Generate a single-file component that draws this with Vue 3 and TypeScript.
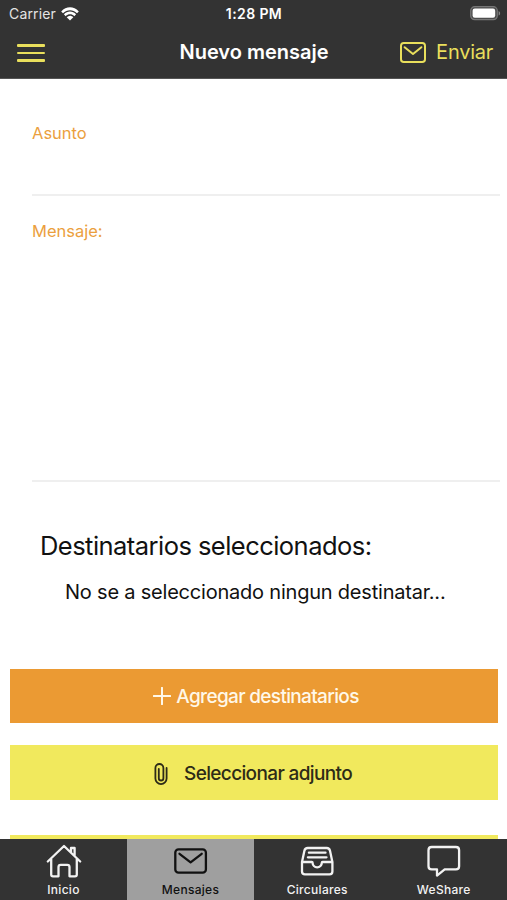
<script setup lang="ts">
import { ref } from 'vue'

type TabId = 'inicio' | 'mensajes' | 'circulares' | 'weshare'

interface Tab {
  id: TabId
  label: string
}

const tabs: Tab[] = [
  { id: 'inicio', label: 'Inicio' },
  { id: 'mensajes', label: 'Mensajes' },
  { id: 'circulares', label: 'Circulares' },
  { id: 'weshare', label: 'WeShare' },
]

const active = ref<TabId>('mensajes')
const subject = ref('')
const message = ref('')
</script>

<template>
  <div class="screen">
    <header class="header">
      <div class="status">
        <div class="carrier">
          <span>Carrier</span>
          <svg class="wifi" viewBox="0 0 18 14" width="18" height="14">
            <path d="M0.2 4.4C5.2-1 12.800-1 17.800 4.400L16 6.300C12 2.300 6 2.300 2 6.300Z" />
            <path d="M2.900 7.300C6.400 3.700 11.600 3.700 15.100 7.300L13.300 9.200C10.800 6.700 7.200 6.700 4.700 9.200Z" />
            <path d="M5.700 10.200C7.700 8.200 10.300 8.200 12.300 10.200L9 13.600Z" />
          </svg>
        </div>
        <div class="time">1:28 PM</div>
        <div class="battery">
          <svg viewBox="0 0 31 15" width="31" height="15">
            <rect x=".7" y=".7" width="26.6" height="13" rx="4" fill="#4d4d4d" stroke="#777" stroke-width="1.2" />
            <rect x="2.6" y="2.6" width="22.6" height="9.2" rx="2.2" fill="#fff" />
            <path d="M28.6 5c2 .8 2 3.800 0 4.600z" fill="#858585" />
          </svg>
        </div>
      </div>
      <div class="nav">
        <button class="menu" aria-label="Menú"><i></i><i></i><i></i></button>
        <h1 class="title">Nuevo mensaje</h1>
        <button class="send">
          <svg viewBox="0 0 26 21" width="26" height="21">
            <rect x="1" y="1" width="24" height="19" rx="2.800" />
            <path d="M4.600 5.200L13 12l8.400-6.800" />
          </svg>
          <span>Enviar</span>
        </button>
      </div>
    </header>

    <main class="content">
      <label class="field subject">
        <span class="label">Asunto</span>
        <input v-model="subject" type="text" />
      </label>
      <label class="field message">
        <span class="label">Mensaje:</span>
        <textarea v-model="message"></textarea>
      </label>
      <h2 class="heading">Destinatarios seleccionados:</h2>
      <p class="empty">No se a seleccionado ningun destinatar...</p>
      <button class="btn add">
        <svg viewBox="0 0 18 18" width="18" height="18"><path d="M9 .8v16.400M.8 9h16.400" /></svg>
        <span>Agregar destinatarios</span>
      </button>
      <button class="btn attach">
        <svg viewBox="0 0 14 22" width="14" height="22">
          <path d="M12.600 5v10.500a5.600 5.600 0 0 1-11.200 0V5a4 4 0 0 1 8 0v10.200a2.300 2.300 0 0 1-4.600 0V6" />
        </svg>
        <span>Seleccionar adjunto</span>
      </button>
      <div class="btn next"></div>
    </main>

    <nav class="tabs">
      <button
        v-for="tab in tabs"
        :key="tab.id"
        :class="['tab', tab.id, { active: tab.id === active }]"
        @click="active = tab.id"
      >
        <svg viewBox="0 0 36 34" width="36" height="34">
          <template v-if="tab.id === 'inicio'">
            <path d="M1.800 17.500L18 2l16.200 15.500M25 8.500V4h3.600v8M5.200 15v15.500q0 1.800 1.800 1.800h5.500V23q0-2.200 2.200-2.200h6.600q2.200 0 2.200 2.200v9.300H29q1.800 0 1.800-1.800V15" />
          </template>
          <template v-else-if="tab.id === 'mensajes'">
            <rect x="2.300" y="5.300" width="30.600" height="23.400" rx="3.200" />
            <path d="M6.500 9.800l11.100 8.500 11.100-8.500" />
          </template>
          <template v-else-if="tab.id === 'circulares'">
            <path d="M3 18L5.400 6.800Q6 4 8.700 4h19q2.700 0 3.300 2.800L33.400 18v9.400q0 2.900-2.900 2.900H5.900Q3 30.300 3 27.400zM3 18h9.800q.8 0 .8.800a4.600 4.600 0 0 0 9.200 0q0-.8.800-.8h9.800M9.900 8.700h16.600M8.900 13.300h18.600" />
          </template>
          <template v-else>
            <path d="M5.700 3h24.200q3.200 0 3.200 3.200v16q0 3.200-3.200 3.200H18.700L11 31.600v-6.200H5.700q-3.200 0-3.200-3.200v-16Q2.500 3 5.700 3z" />
          </template>
        </svg>
        <span>{{ tab.label }}</span>
      </button>
    </nav>
  </div>
</template>

<style>
body {
  margin: 0;
  background: #fff;
}
</style>

<style scoped>
.screen {
  width: 507px;
  height: 900px;
  display: flex;
  flex-direction: column;
  overflow: hidden;
  background: #fff;
  font-family: Inter, 'Liberation Sans', sans-serif;
  color: #111;
}
button {
  border: 0;
  padding: 0;
  background: none;
  font: inherit;
  color: inherit;
}
svg {
  display: block;
  flex: none;
}
span {
  white-space: nowrap;
}
.header {
  flex: none;
  height: 79px;
  box-sizing: border-box;
  background: #333;
  border-bottom: 1px solid #555;
  color: #fff;
}
.status {
  height: 27px;
  display: grid;
  grid-template-columns: 1fr auto 1fr;
  align-items: center;
  padding: 0 6px 0 9px;
  font-size: 14px;
}
.carrier {
  display: flex;
  align-items: center;
  gap: 5px;
  color: #e4e4e4;
  letter-spacing: 0.15px;
}
.wifi {
  fill: #fff;
}
.time {
  margin-right: 2px;
  font-weight: 600;
  font-size: 14px;
  letter-spacing: 0.400px;
}
.battery {
  justify-self: end;
}
.nav {
  height: 50px;
  display: grid;
  grid-template-columns: 1fr auto 1fr;
  align-items: center;
  padding: 0 14px 0 17px;
}
.menu {
  width: 28px;
  display: grid;
  gap: 4.500px;
  padding-top: 2px;
}
.menu i {
  height: 2.700px;
  border-radius: 1px;
  background: #e9df5c;
}
.title {
  margin: 0 2px 0 0;
  font-size: 20px;
  font-weight: 600;
}
.send {
  justify-self: end;
  display: flex;
  align-items: center;
  gap: 10px;
  color: #e9df5c;
  font-size: 20px;
  letter-spacing: -0.250px;
}
.send svg,
.btn svg,
.tab svg {
  fill: none;
  stroke: currentColor;
  stroke-width: 2;
  stroke-linecap: round;
  stroke-linejoin: round;
}
.content {
  flex: 1;
  min-height: 0;
  overflow: hidden;
  display: flex;
  flex-direction: column;
}
.field {
  flex: none;
  box-sizing: border-box;
  display: flex;
  flex-direction: column;
  margin: 0 7px 0 32px;
  border-bottom: 2px solid #efefef;
}
.subject {
  height: 117px;
  padding-top: 44px;
}
.message {
  height: 286px;
  padding-top: 25px;
}
.label {
  font-size: 16.500px;
  line-height: 20px;
  color: #eb9f3e;
}
input,
textarea {
  flex: 1;
  min-height: 0;
  border: 0;
  padding: 0;
  outline: 0;
  resize: none;
  background: none;
  font: inherit;
}
.heading {
  flex: none;
  margin: 48px 0 0 40px;
  font-size: 25.500px;
  line-height: 32px;
  font-weight: 400;
  letter-spacing: -0.540px;
  white-space: nowrap;
}
.empty {
  flex: none;
  margin: 18px 0 0 65px;
  font-size: 20px;
  line-height: 24px;
  letter-spacing: -0.210px;
  white-space: nowrap;
}
.btn {
  flex: none;
  height: 54px;
  margin: 0 9px 0 10px;
  display: flex;
  align-items: center;
  justify-content: center;
  font-size: 19px;
  font-weight: 500;
  letter-spacing: -0.660px;
}
.add {
  margin-top: 65px;
  padding-left: 4px;
  background: #eb9a33;
  color: #fff8e8;
  gap: 5px;
}
.attach {
  height: 55px;
  margin-top: 22px;
  background: #f1e95d;
  color: #2d2b17;
  gap: 16px;
  letter-spacing: -0.640px;
  padding-top: 2px;
  padding-right: 2px;
}
.attach svg {
  stroke-width: 1.800;
}
.next {
  margin-top: 35px;
  background: #f1e95d;
}
.tabs {
  flex: none;
  height: 61px;
  display: grid;
  grid-template-columns: 127px 127px 126.500px 126.500px;
  background: #333;
}
.tab {
  display: flex;
  flex-direction: column;
  align-items: center;
  padding-top: 5px;
  color: #f2f2f2;
  font-size: 12px;
  font-weight: 500;
  letter-spacing: 0.300px;
}
.tab svg {
  stroke-width: 2.300;
}
.tab span {
  line-height: 16px;
  margin-top: 4px;
}
.tab.active {
  background: #9f9f9f;
  color: #111;
}
</style>
